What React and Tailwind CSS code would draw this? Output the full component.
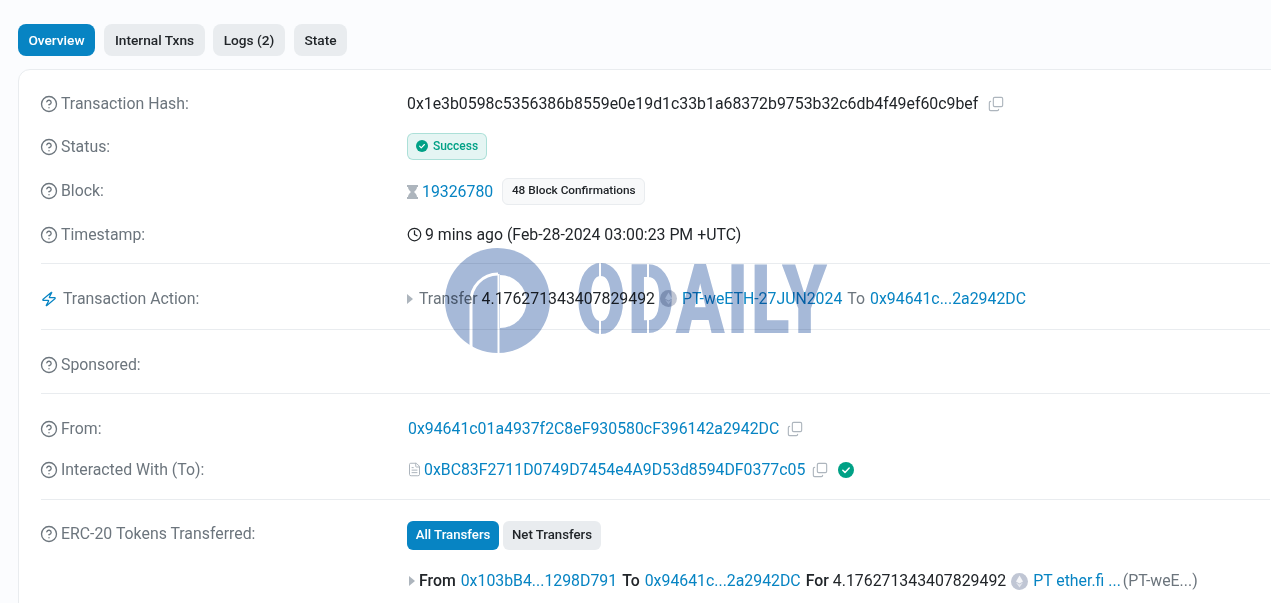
import React from "react";
import { CircleHelp, Copy, Clock, Zap, FileText } from "lucide-react";

const link = "text-[#0784c3]";

function Tab({ active, children, className = "" }) {
  return (
    <span
      className={`flex h-8 items-center justify-center rounded-lg text-[13.7px] font-medium ${
        active ? "bg-[#0784c3] text-white" : "bg-[#e9ecef] text-[#212529]"
      } ${className}`}
    >
      {children}
    </span>
  );
}

function Row({ label, icon, className = "", children }) {
  return (
    <div className={`flex h-6 items-center ${className}`}>
      <div className="flex w-[366px] shrink-0 items-center text-[#6c757d]">
        {icon || <CircleHelp size={18} strokeWidth={1.8} className="-ml-px mr-[3px] shrink-0 text-[#6c757d]" />}
        <span>{label}</span>
      </div>
      <div className="flex items-center whitespace-nowrap text-[#212529]">{children}</div>
    </div>
  );
}

function Divider({ className = "" }) {
  return <div className={`h-px bg-[#e9ecef] ${className}`} />;
}

function CopyIcon({ className = "" }) {
  return <Copy size={16} strokeWidth={1.7} className={`-scale-y-100 text-[#adb5bd] ${className}`} />;
}

function CheckCircle({ size, className = "" }) {
  return (
    <svg width={size} height={size} viewBox="0 0 16 16" className={className}>
      <circle cx="8" cy="8" r="8" fill="#00a186" />
      <path d="M4.8 8.2l2.200 2.200 4.200-4.400" fill="none" stroke="#fff" strokeWidth="1.500" strokeLinecap="round" strokeLinejoin="round" />
    </svg>
  );
}

function EthCoin({ className = "" }) {
  return (
    <svg width="17" height="17" viewBox="0 0 17 17" className={className}>
      <circle cx="8.500" cy="8.500" r="8.500" fill="#c0c6d4" />
      <path d="M8.500 2.500L5 8.600l3.500 2 3.500-2z" fill="#f4f5f8" />
      <path d="M5 9.600l3.500 4.900 3.500-4.900-3.500 2z" fill="#e6e8ee" />
    </svg>
  );
}

function Caret({ className = "" }) {
  return (
    <svg width="6" height="10" viewBox="0 0 6 10" className={className}>
      <path d="M0 0l6 5-6 5z" fill="#adb5bd" />
    </svg>
  );
}

function Hourglass() {
  return (
    <svg width="11" height="14" viewBox="0 0 11 14" className="mr-1 mt-[2px]">
      <path d="M0 0h11v2h-1c0 2-1.500 3.800-3 5 1.500 1.200 3 3 3 5h1v2H0v-2h1c0-2 1.500-3.800 3-5C2.500 5.800 1 4 1 2H0z" fill="#adb5bd" />
    </svg>
  );
}

/* watermark sits over the page, multiply keeps the text readable under it */
function Watermark() {
  return (
    <div className="pointer-events-none absolute left-[445px] top-[248px] h-[105px] w-[400px] mix-blend-multiply">
      <svg width="105" height="105" viewBox="0 0 105 105" className="absolute left-0 top-0">
        <circle cx="52.500" cy="52.500" r="52.500" fill="#a6b9d8" />
        <path d="M55 27a26.500 26.500 0 0 1 0 53z" fill="#fff" />
        <path d="M53.500 26v79" stroke="#fff" strokeWidth="2" fill="none" />
        <path d="M26 102V54a27 27 0 0 1 27-28" stroke="#fff" strokeWidth="3" fill="none" />
      </svg>
      <span className="absolute left-[131px] top-[4px] origin-left scale-x-[0.74] font-['Roboto',sans-serif] text-[97px] font-black leading-none tracking-[3px] text-[#a6b9d8]">
        ODAILY
      </span>
      <span className="absolute left-[154px] top-[14px] h-[78px] w-[2px] bg-white" />
      <span className="absolute left-[202px] top-[16px] h-[74px] w-[2px] bg-white" />
    </div>
  );
}

export default function App() {
  return (
    <div className="relative h-[603px] w-full overflow-hidden bg-[#fbfcfe] font-['Roboto',sans-serif] text-[15.85px]">
      {/* TABS */}
      <div className="flex pl-[18px] pt-6">
        <Tab active className="w-[77px]">Overview</Tab>
        <Tab className="ml-[9px] w-[101px]">Internal Txns</Tab>
        <Tab className="ml-2 w-[72px]">Logs (2)</Tab>
        <Tab className="ml-[9px] w-[53px]">State</Tab>
      </div>

      {/* OVERVIEW CARD */}
      <div className="ml-[18px] mr-[-40px] mt-[13px] h-[600px] rounded-xl border border-[#e9ecef] bg-white pl-[22px] pr-[40px] pt-[22px]">
        <Row label="Transaction Hash:">
          <span>0x1e3b0598c5356386b8559e0e19d1c33b1a68372b9753b32c6db4f49ef60c9bef</span>
          <CopyIcon className="ml-[10px]" />
        </Row>

        <Row label="Status:" className="mt-[19px]">
          <span className="mb-[2px] flex h-[27px] w-20 items-center justify-center gap-[5px] rounded-md border border-[#00a18640] bg-[#00a1861a] text-xs font-medium text-[#00a186]">
            <CheckCircle size={12} />
            Success
          </span>
        </Row>

        <Row label="Block:" className="mt-5">
          <Hourglass />
          <span className={`mt-[2px] ${link}`}>19326780</span>
          <span className="ml-[9px] flex h-[27px] w-[143px] items-center justify-center rounded-md border border-[#e9ecef] bg-[#f8f9fa] text-[11.8px] font-medium text-[#212529]">
            48 Block Confirmations
          </span>
        </Row>

        <Row label="Timestamp:" className="mt-5">
          <Clock size={15} strokeWidth={2} className="mr-[3px] text-[#212529]" />
          <span>9 mins ago (Feb-28-2024 03:00:23 PM +UTC)</span>
        </Row>

        <Divider className="mt-4" />

        <Row
          label="Transaction Action:"
          className="mt-[23px]"
          icon={<Zap size={16} strokeWidth={2} className="mr-[6px] -skew-x-12 text-[#0784c3]" />}
        >
          <Caret className="mr-[6px]" />
          <span className="text-[#6c757d]">Transfer</span>
          <span className="ml-1">4.176271343407829492</span>
          <EthCoin className="ml-[5px] mr-[5px]" />
          <span className={link}>PT-weETH-27JUN2024</span>
          <span className="ml-[5px] text-[#6c757d]">To</span>
          <span className={`ml-[5px] ${link}`}>0x94641c...2a2942DC</span>
        </Row>

        <Divider className="mt-[18px]" />

        <Row label="Sponsored:" className="mt-[23px]" />

        <Divider className="mt-4" />

        <Row label="From:" className="mt-[23px]">
          <span className={`ml-px ${link}`}>0x94641c01a4937f2C8eF930580cF396142a2942DC</span>
          <CopyIcon className="ml-2" />
        </Row>

        <Row label="Interacted With (To):" className="mt-[17px]">
          <FileText size={15} strokeWidth={1.6} className="mr-[2px] text-[#adb5bd]" />
          <span className={link}>0xBC83F2711D0749D7454e4A9D53d8594DF0377c05</span>
          <CopyIcon className="ml-[7px]" />
          <CheckCircle size={16} className="ml-[10px]" />
        </Row>

        <Divider className="mt-[17px]" />

        <Row label="ERC-20 Tokens Transferred:" className="mt-[22px]">
          <div className="mt-[2px] flex gap-1">
            <span className="flex h-[29px] w-[92px] items-center justify-center rounded-md bg-[#0784c3] text-[13.200px] font-medium text-white">
              All Transfers
            </span>
            <span className="flex h-[29px] w-[98px] items-center justify-center rounded-md bg-[#e9ecef] text-[13.200px] font-medium text-[#212529]">
              Net Transfers
            </span>
          </div>
        </Row>

        <div className="ml-[366px] mt-[23px] flex h-6 items-center whitespace-nowrap text-[#212529]">
          <Caret className="ml-[2px] mr-1" />
          <span className="font-medium">From</span>
          <span className={`ml-[5px] ${link}`}>0x103bB4...1298D791</span>
          <span className="ml-[5px] font-medium">To</span>
          <span className={`ml-[5px] ${link}`}>0x94641c...2a2942DC</span>
          <span className="ml-[5px] font-medium">For</span>
          <span className="ml-1">4.176271343407829492</span>
          <EthCoin className="ml-[5px] mr-[5px]" />
          <span className={link}>PT ether.fi ...</span>
          <span className="ml-[2px] text-[#6c757d]">(PT-weE...)</span>
        </div>
      </div>

      <Watermark />
    </div>
  );
}
